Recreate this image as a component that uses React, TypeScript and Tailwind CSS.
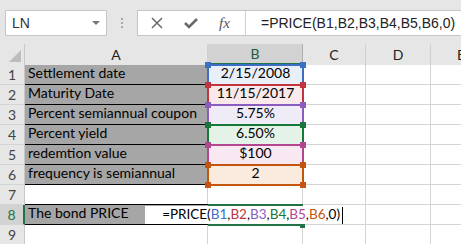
import React from "react";

const refs = [
  { text: "2/15/2008", bg: "bg-[#e8eff9]", border: "border-[#3b6fc4]", handle: "bg-[#3b6fc4]" },
  { text: "11/15/2017", bg: "bg-[#fae9ea]", border: "border-[#c3353d]", handle: "bg-[#c3353d]" },
  { text: "5.75%", bg: "bg-[#f0ecf7]", border: "border-[#8a5cbf]", handle: "bg-[#8a5cbf]" },
  { text: "6.50%", bg: "bg-[#e5f2e7]", border: "border-[#16793a]", handle: "bg-[#16793a]" },
  { text: "$100", bg: "bg-[#f7e8f2]", border: "border-[#b2478f]", handle: "bg-[#b2478f]" },
  { text: "2", bg: "bg-[#fbebdf]", border: "border-[#c35511]", handle: "bg-[#c35511]" },
];

const labels = [
  "Settlement date",
  "Maturity Date",
  "Percent semiannual coupon",
  "Percent yield",
  "redemtion value",
  "frequency is semiannual",
];

const cellFont = "font-['Lato','Liberation_Sans',sans-serif] text-[14px] whitespace-nowrap overflow-hidden";

function Gap() {
  return <div className="border-r border-b border-[#d4d4d4]" />;
}

export default function App() {
  const rows = [1, 2, 3, 4, 5, 6, 7, 8, 9];
  return (
    <div className="w-[461px] h-[244px] overflow-hidden bg-white relative">
      {/* top bar */}
      <div className="h-[44px] bg-[#e6e6e6] flex items-start pt-[10px] pl-[5px]">
        <div className="w-[102px] h-[26px] bg-white border border-[#c6c6c6] flex items-center justify-between pl-[6px] pr-[6px]">
          <span className="font-['Liberation_Sans',sans-serif] text-[14px] text-[#333]">LN</span>
          <div className="w-0 h-0 border-l-[4px] border-r-[4px] border-t-[4px] border-l-transparent border-r-transparent border-t-[#777]" />
        </div>
        <div className="w-[30px] h-[26px] flex flex-col items-center justify-center gap-[2px]">
          <div className="w-[2px] h-[2px] bg-[#a8a8a8]" />
          <div className="w-[2px] h-[2px] bg-[#a8a8a8]" />
          <div className="w-[2px] h-[2px] bg-[#a8a8a8]" />
        </div>
        <div className="flex-1 h-[26px] bg-white border border-[#c6c6c6] border-r-0 flex items-center">
          <div className="w-[108px] h-full flex items-center border-r border-[#d0d0d0]">
            <svg width="12" height="12" viewBox="0 0 12 12" className="ml-[13px]">
              <path d="M1 1 L11 11 M11 1 L1 11" stroke="#6a6a6a" strokeWidth="1.5" />
            </svg>
            <svg width="14" height="12" viewBox="0 0 14 12" className="ml-[21px]">
              <path d="M1 6 L5 10 L13 2" stroke="#6a6a6a" strokeWidth="2.6" fill="none" />
            </svg>
            <span className="ml-[21px] font-['Liberation_Serif',serif] italic text-[15px] text-[#555]">fx</span>
          </div>
          <span className="ml-[15px] font-['Liberation_Sans',sans-serif] text-[14px] text-[#222]">
            =PRICE(B1,B2,B3,B4,B5,B6,0)
          </span>
        </div>
      </div>

      {/* sheet */}
      <div className="relative">
        <div className="grid grid-cols-[25px_183px_95px_63px_65px_30px] grid-rows-[21px] auto-rows-[20px] font-['Lato','Liberation_Sans',sans-serif]">
          {/* header row */}
          <div className="bg-[#e6e6e6] border-r border-[#c8c8c8] relative">
            <div
              className="absolute right-[3px] bottom-[3px] w-0 h-0"
              style={{ borderBottom: "12px solid #bdbdbd", borderLeft: "12px solid transparent" }}
            />
          </div>
          <div className="bg-[#e6e6e6] border-r border-[#d0d0d0] flex items-center justify-center text-[14px] text-[#222]">A</div>
          <div className="bg-[#d2d2d2] border-r border-[#b0b0b0] border-b-2 border-b-[#217346] flex items-center justify-center text-[14px] text-[#1f5a3a]">B</div>
          <div className="bg-[#e6e6e6] border-r border-[#d0d0d0] flex items-center justify-center text-[14px] text-[#222]">C</div>
          <div className="bg-[#e6e6e6] border-r border-[#d0d0d0] flex items-center justify-center text-[14px] text-[#222]">D</div>
          <div className="bg-[#e6e6e6] flex items-center pl-[26px] text-[14px] text-[#222]">E</div>

          {rows.map((r) => {
            const isData = r <= 6;
            const isActive = r === 8;
            return (
              <React.Fragment key={r}>
                <div
                  className={
                    "flex items-center justify-center text-[14px] border-b border-[#d4d4d4] " +
                    (isActive
                      ? "bg-[#d2d2d2] text-[#217346] border-r-2 border-r-[#217346]"
                      : "bg-[#e6e6e6] text-[#444] border-r border-r-[#c8c8c8]")
                  }
                >
                  {r}
                </div>
                {isData ? (
                  <div className={"bg-[#a6a6a6] border-b border-black flex items-end pl-[3px] pb-[1px] text-black " + cellFont}>
                    {labels[r - 1]}
                  </div>
                ) : r === 8 ? (
                  <div className={"bg-[#a6a6a6] border-t border-b border-black -mt-[1px] h-[21px] flex items-end pl-[3px] pb-[1px] text-black " + cellFont}>
                    The bond PRICE
                  </div>
                ) : (
                  <div className="border-r border-b border-[#d4d4d4]" />
                )}
                {isData ? (
                  <div className={"border-b border-[#d4d4d4] flex items-end justify-center pb-[1px] text-black " + refs[r - 1].bg + " " + cellFont}>
                    {refs[r - 1].text}
                  </div>
                ) : (
                  <Gap />
                )}
                <Gap />
                <Gap />
                <div className="border-b border-[#d4d4d4]" />
              </React.Fragment>
            );
          })}
        </div>

        {/* reference highlight boxes */}
        {refs.map((ref, i) => (
          <div
            key={i}
            className={"absolute left-[207px] w-[97px] h-[22px] border-2 " + ref.border}
            style={{ top: 20 + i * 20 }}
          >
            <div className={"absolute -left-[4px] -top-[4px] w-[6px] h-[6px] " + ref.handle} />
            <div className={"absolute -right-[4px] -top-[4px] w-[6px] h-[6px] " + ref.handle} />
            <div className={"absolute -left-[4px] -bottom-[4px] w-[6px] h-[6px] " + ref.handle} />
            <div className={"absolute -right-[4px] -bottom-[4px] w-[6px] h-[6px] " + ref.handle} />
          </div>
        ))}

        {/* active cell B8 */}
        <div className="absolute left-[208px] top-[160px] w-[95px] h-[2px] bg-[#217346]" />
        <div className="absolute left-[208px] top-[180px] w-[95px] h-[2px] bg-[#217346]" />
        <div className="absolute left-[300px] top-[180px] w-[5px] h-[4px] bg-[#217346]" />

        {/* in-cell edit box */}
        <div className="absolute left-[145px] top-[162px] w-[200px] h-[18px] bg-white flex items-end justify-end pr-[2px] text-black font-['Lato','Liberation_Sans',sans-serif] text-[13.5px] whitespace-nowrap">
          <span>=PRICE(</span>
          <span className="text-[#3b6fc4]">B1</span>
          <span>,</span>
          <span className="text-[#c3353d]">B2</span>
          <span>,</span>
          <span className="text-[#8a5cbf]">B3</span>
          <span>,</span>
          <span className="text-[#16793a]">B4</span>
          <span>,</span>
          <span className="text-[#b2478f]">B5</span>
          <span>,</span>
          <span className="text-[#c35511]">B6</span>
          <span>,0)</span>
          <div className="w-[1px] h-[17px] bg-black ml-[2px]" />
        </div>
      </div>
    </div>
  );
}
